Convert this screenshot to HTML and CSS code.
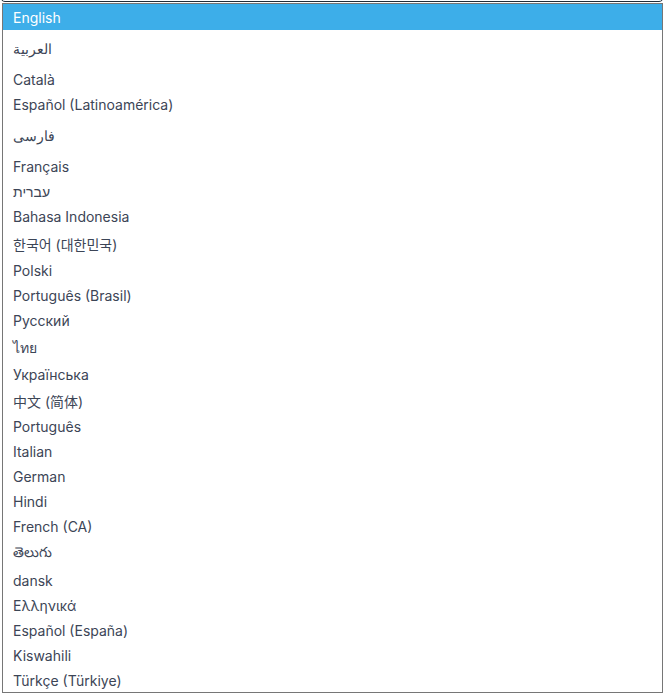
FILE: index.html
```html
<!DOCTYPE html>
<html lang="en">
<head>
    <meta charset="UTF-8">
    <meta name="viewport" content="width=device-width, initial-scale=1.0">
    <title>Language</title>
    <link rel="stylesheet" href="styles.css">
</head>
<body>

    <div class="page">
        <!-- the closed select sits above the visible area -->
        <div class="select-box"></div>

        <!-- open dropdown list -->
        <div class="listbox" role="listbox">
            <div class="option selected">English</div>
            <div class="option script-tall" lang="ar">العربية</div>
            <div class="option">Català</div>
            <div class="option">Español (Latinoamérica)</div>
            <div class="option script-tall" lang="fa">فارسی</div>
            <div class="option">Français</div>
            <div class="option" lang="he">עברית</div>
            <div class="option">Bahasa Indonesia</div>
            <div class="option script-mid" lang="ko">한국어 (대한민국)</div>
            <div class="option">Polski</div>
            <div class="option">Português (Brasil)</div>
            <div class="option">Русский</div>
            <div class="option script-mid" lang="th">ไทย</div>
            <div class="option">Українська</div>
            <div class="option script-cjk" lang="zh">中文 (简体)</div>
            <div class="option">Português</div>
            <div class="option">Italian</div>
            <div class="option">German</div>
            <div class="option">Hindi</div>
            <div class="option">French (CA)</div>
            <div class="option script-mid" lang="te">తెలుగు</div>
            <div class="option">dansk</div>
            <div class="option">Ελληνικά</div>
            <div class="option">Español (España)</div>
            <div class="option">Kiswahili</div>
            <div class="option">Türkçe (Türkiye)</div>
        </div>
    </div>

</body>
</html>
```

FILE: styles.css
```css
body {
    margin: 0;
    background-color: #ffffff;
    font-family: Inter, "Noto Sans", "Noto Sans CJK SC", sans-serif;
    font-size: 14px;
    color: #3c4556;
}
.page {
    position: relative;
    width: 664px;
    height: 694px;
    overflow: hidden;
}
.select-box {
    height: 40px;
    margin-top: -38px;
    border: 1px solid #1f2b38;
    border-radius: 5px;
    box-sizing: border-box;
}
.listbox {
    position: absolute;
    left: 2px;
    top: 3px;
    width: 661px;
    height: 690px;
    box-sizing: border-box;
    border: 1px solid #767676;
    background-color: #ffffff;
    overflow: hidden;
}
.option {
    display: flex;
    align-items: center;
    height: 25px;
    padding: 0 10px;
    white-space: nowrap;
}
.option.script-tall {
    height: 37px;
}
.option.script-mid {
    height: 29px;
}
.option.script-cjk {
    height: 27px;
}
.option.selected {
    height: 26px;
    padding-top: 1px;
    box-sizing: border-box;
    background-color: #3daee9;
    color: #ffffff;
}
```
